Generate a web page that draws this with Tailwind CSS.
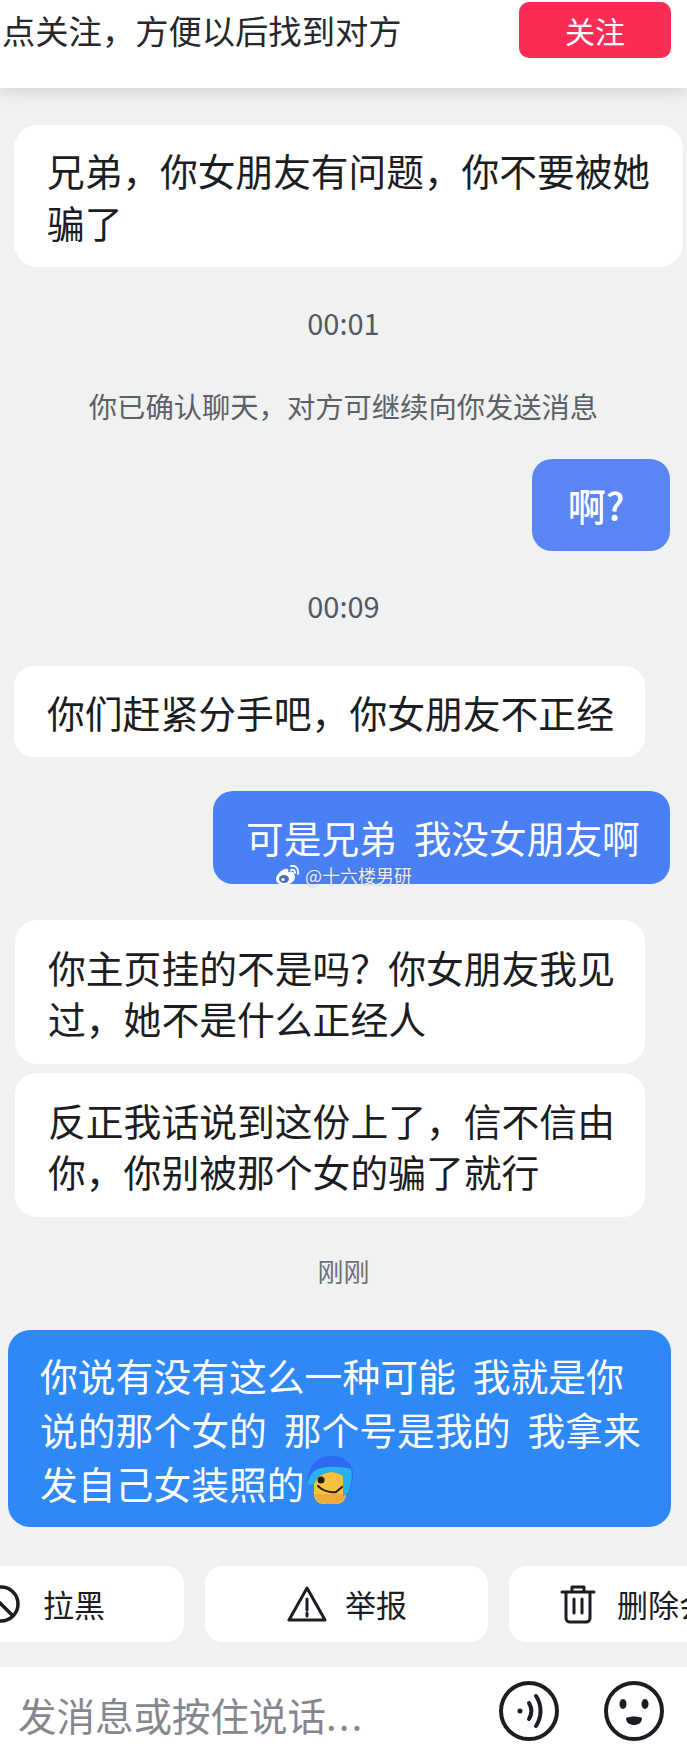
<!DOCTYPE html>
<html lang="zh-CN">

<head>
    <meta charset="utf-8" />
    <meta name="viewport" content="width=device-width, initial-scale=1" />
    <title>Chat</title>
    <script src="https://cdn.jsdelivr.net/npm/@tailwindcss/browser@4"></script>
</head>

<body class="bg-[#f0f1f1] font-['Noto_Sans_CJK_SC','Noto_Sans',sans-serif] text-[#1b1d22]">
    <div class="w-[687px] h-[1755px] overflow-hidden flex flex-col">
        <!-- follow bar -->
        <header class="h-[88px] shrink-0 bg-white flex justify-between pl-[2px] pr-[16px] pt-[2px] shadow-[0_4px_16px_rgba(0,0,0,0.12)]">
            <p class="text-[33.3px] leading-[56px] whitespace-nowrap text-[#26282c]">点关注，方便以后找到对方</p>
            <button class="w-[152px] h-[56px] rounded-[10px] bg-[#fb2c55] text-white text-[30px] leading-[56px]">关注</button>
        </header>

        <!-- messages -->
        <main class="flex flex-col items-start flex-1">
            <div class="ml-[14px] mt-[37px] w-[669px] h-[142px] bg-white rounded-[24px] px-[33px] py-[19px] text-[37.7px] leading-[52px]">兄弟，你女朋友有问题，你不要被她<br />骗了</div>

            <p class="w-full mt-[35px] text-center text-[29px] leading-[40px] text-[#55595f]">00:01</p>
            <p class="w-full mt-[44px] text-center text-[28.3px] leading-[40px] text-[#5d6167]">你已确认聊天，对方可继续向你发送消息</p>

            <div class="self-end mr-[17px] mt-[33px] w-[138px] h-[92px] bg-[#5b85f5] rounded-[20px] text-white text-[38px] font-medium leading-[92px] text-center pr-[10px]">啊?</div>

            <p class="w-full mt-[34px] text-center text-[29px] leading-[40px] text-[#55595f]">00:09</p>

            <div class="ml-[14px] mt-[41px] w-[631px] h-[91px] bg-white rounded-[20px] pl-[33px] text-[37.8px] leading-[91px]">你们赶紧分手吧，你女朋友不正经</div>

            <div class="relative self-end mr-[17px] mt-[34px] w-[457px] h-[93px] bg-[#4a80f5] rounded-[20px] pl-[33px] text-white text-[37.7px] leading-[92px]">
                <span class="whitespace-pre">可是兄弟  我没女朋友啊</span>
                <div class="absolute left-[62px] top-[72px] flex items-center gap-[5px] text-[18px] leading-[24px] text-white/90 [text-shadow:0_0_2px_rgba(70,70,70,0.55)]">
                    <svg class="w-[25px] h-[21px]" viewBox="0 0 25 21" fill="none">
                        <path d="M1 14c0-4 5-9 9-10 3-1 4 1 3 3 3-1 6-1 6 2 0 1 1 1 1 3 0 4-5 8-10 8S1 18 1 14z" fill="#fff" />
                        <ellipse cx="9" cy="14" rx="5" ry="4" fill="#4a6fb5" />
                        <circle cx="8" cy="14.5" r="1.6" fill="#fff" />
                        <path d="M16 5c2-1 4 0 4 3M16 1c5-1 8 3 7 8" stroke="#fff" stroke-width="1.8" stroke-linecap="round" />
                    </svg>
                    <span>@十六楼男研</span>
                </div>
            </div>

            <div class="ml-[15px] mt-[36px] w-[630px] h-[144px] bg-white rounded-[22px] pl-[33px] py-[21px] text-[37.8px] leading-[51px]">你主页挂的不是吗？你女朋友我见<br />过，她不是什么正经人</div>
            <div class="ml-[15px] mt-[9px] w-[630px] h-[144px] bg-white rounded-[22px] pl-[33px] py-[21px] text-[37.8px] leading-[51px]">反正我话说到这份上了，信不信由<br />你，你别被那个女的骗了就行</div>

            <p class="w-full mt-[34px] text-center text-[26px] leading-[40px] text-[#6d7076]">刚刚</p>

            <div class="ml-[8px] mt-[39px] w-[663px] h-[197px] bg-[#2e88f6] rounded-[22px] pl-[32px] py-[18px] text-white text-[37.8px] leading-[54px] whitespace-pre">你说有没有这么一种可能  我就是你
说的那个女的  那个号是我的  我拿来
<span class="inline-flex items-start">发自己女装照的<svg class="w-[46px] h-[48px] ml-[2px]" viewBox="0 0 46 48" fill="none">
                    <rect x="7" y="16" width="32" height="32" rx="9" fill="#f4c23e" />
                    <path d="M7 38c2 8 8 10 16 10s14-2 16-10z" fill="#eda93a" />
                    <path d="M1 28C0 12 8 1 22 0c12-1 23 5 24 17 0 8-2 15-5 20l-5 3c0-7 1-14 0-20-5-4-12-5-17-3-5 1-9 4-11 9-2 3-5 4-7 2z" fill="#2d6cf0" />
                    <path d="M1 28c0-5 3-11 8-14 8-4 22-4 35-1 2 8 0 17-3 24l-5 3c0-7 1-14 0-20-5-4-12-5-17-3-5 1-9 4-11 9-2 3-5 4-7 2z" fill="#29b2ee" />
                    <circle cx="14" cy="24" r="3.5" fill="#2a1c10" />
                    <path d="M11 30c4 4 11 7 18 6l6-5" stroke="#2a1c10" stroke-width="2" stroke-linecap="round" />
                </svg></span></div>
        </main>

        <!-- quick actions -->
        <div class="flex items-center gap-[21px] -ml-[60px] h-[76px] mb-[25px] shrink-0 whitespace-nowrap text-[31px]">
            <button class="w-[244px] h-[76px] shrink-0 bg-white rounded-[18px] flex items-center pl-[42px] gap-[23px]">
                <svg class="w-[38px] h-[38px]" viewBox="0 0 38 38" fill="none" stroke="#1b1d22" stroke-width="3.5"><circle cx="19" cy="19" r="17" /><path d="M7 7l24 24" /></svg>
                <span>拉黑</span>
            </button>
            <button class="w-[283px] h-[76px] shrink-0 bg-white rounded-[18px] flex items-center pl-[82px] gap-[18px]">
                <svg class="w-[40px] h-[38px]" viewBox="0 0 40 38" fill="none" stroke="#1b1d22" stroke-width="3" stroke-linejoin="round"><path d="M20 3L2 35h36z" /><path d="M20 14v11M20 28v3" stroke-linecap="round" /></svg>
                <span>举报</span>
            </button>
            <button class="w-[283px] h-[76px] shrink-0 bg-white rounded-[18px] flex items-center pl-[51px] gap-[21px]">
                <svg class="w-[36px] h-[40px]" viewBox="0 0 36 40" fill="none" stroke="#1b1d22" stroke-width="3" stroke-linecap="round" stroke-linejoin="round"><path d="M2 8h32M12 8V3h12v5M6 8v26a4 4 0 0 0 4 4h16a4 4 0 0 0 4-4V8M14 15v14M22 15v14" /></svg>
                <span>删除会话</span>
            </button>
        </div>

        <!-- input bar -->
        <footer class="h-[88px] shrink-0 bg-white flex items-center pl-[18px] pr-[22px]">
            <p class="flex-1 pt-[6px] text-[38.5px] leading-[50px] text-[#85878f]">发消息或按住说话<span class="tracking-[2px]">...</span></p>
            <svg class="w-[62px] h-[62px]" viewBox="0 0 62 62" fill="none" stroke="#1b1d22" stroke-width="4" stroke-linecap="round">
                <circle cx="31" cy="31" r="28" />
                <circle cx="22" cy="31" r="1.5" fill="#1b1d22" stroke-width="2" />
                <path d="M31 23c3 5 3 11 0 16" />
                <path d="M38 16c6 9 6 21 0 30" />
            </svg>
            <svg class="w-[62px] h-[62px] ml-[43px]" viewBox="0 0 62 62" fill="none" stroke="#1b1d22" stroke-width="4">
                <circle cx="31" cy="31" r="28" />
                <ellipse cx="20" cy="24" rx="3.5" ry="5" fill="#1b1d22" stroke="none" />
                <ellipse cx="42" cy="24" rx="3.5" ry="5" fill="#1b1d22" stroke="none" />
                <path d="M23 38c5-2 11-2 16 0 0 5-4 7-8 7s-8-2-8-7z" fill="#1b1d22" stroke="none" />
            </svg>
        </footer>
    </div>
</body>

</html>
